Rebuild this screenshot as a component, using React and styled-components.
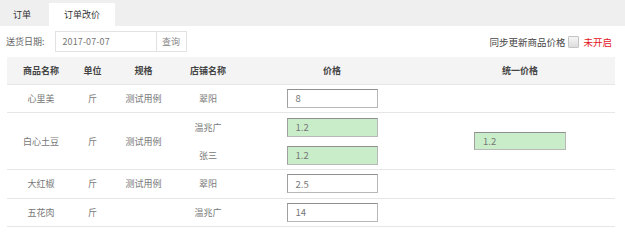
import React from "react";
import styled, { createGlobalStyle } from "styled-components";

const Global = createGlobalStyle`
  html, body { margin: 0; padding: 0; background: #fff; }
  body { font-family: "Noto Sans CJK SC", "Noto Sans", sans-serif; font-size: 9px; color: #666; }
  * { box-sizing: border-box; }
`;

const Page = styled.div`
  width: 625px;
  height: 234px;
  overflow: hidden;
`;

const TabBar = styled.div`
  display: flex;
  align-items: flex-end;
  height: 26px;
  background: #efefef;
  gap: 5px;
`;

const Tab = styled.div`
  width: ${(p) => p.$w}px;
  height: 23px;
  display: flex;
  align-items: center;
  justify-content: center;
  font-size: 9px;
  color: #333;
  background: ${(p) => (p.$active ? "#fff" : "transparent")};
`;

const FilterRow = styled.div`
  display: flex;
  align-items: center;
  padding: 5px 13px 5px 6px;
`;

const Label = styled.span`
  color: #666;
  margin-right: 10px;
  white-space: nowrap;
`;

const DateInput = styled.div`
  width: 102px;
  height: 21px;
  border: 1px solid #e2e2e2;
  display: flex;
  align-items: center;
  padding-left: 7px;
  color: #777;
  letter-spacing: 0.1px;
`;

const QueryButton = styled.div`
  width: 30px;
  height: 21px;
  border: 1px solid #e2e2e2;
  border-left: none;
  display: flex;
  align-items: center;
  justify-content: center;
  color: #888;
  background: #fff;
`;

const Spacer = styled.div`
  flex: 1;
`;

const SyncText = styled.span`
  color: #444;
  font-size: 9.5px;
`;

const CheckBox = styled.span`
  display: inline-block;
  width: 11px;
  height: 12px;
  margin: 0 4px 0 3px;
  border: 1px solid #c4c4c4;
  border-radius: 1px;
  background: linear-gradient(#f6f6f6, #dcdcdc);
`;

const Off = styled.span`
  color: #e2141b;
  font-size: 9.5px;
`;

const TableWrap = styled.div`
  padding: 0 10px 0 7px;
`;

const Table = styled.table`
  width: 608px;
  border-collapse: collapse;
  table-layout: fixed;
`;

const Th = styled.th`
  height: 27px;
  padding: 0;
  background: #f4f4f4;
  font-weight: bold;
  color: #444;
  font-size: 9px;
  text-align: center;
  border-bottom: 1px solid #e6e6e6;
`;

const Td = styled.td`
  height: 28.5px;
  padding: 0;
  text-align: center;
  vertical-align: middle;
  color: #777;
  border-bottom: ${(p) => (p.$noLine ? "none" : "1px solid #e6e6e6")};
`;

const PriceInput = styled.div`
  width: ${(p) => p.$w || 91}px;
  height: ${(p) => p.$h || 19}px;
  margin: 0 auto;
  display: flex;
  align-items: center;
  padding-left: 8px;
  text-align: left;
  color: #777;
  font-size: 9.5px;
  background: ${(p) => (p.$green ? "#c9ecc9" : "#fff")};
  border: 1px solid #b8b8b8;
  border-top-color: #8f8f8f;
  border-left-color: #a0a0a0;
`;

const cols = [68, 35, 67, 62, 186, 190];

export default function App() {
  return (
    <Page>
      <Global />
      <TabBar>
        <Tab $w={44}>订单</Tab>
        <Tab $w={66} $active>订单改价</Tab>
      </TabBar>
      <FilterRow>
        <Label>送货日期:</Label>
        <DateInput>2017-07-07</DateInput>
        <QueryButton>查询</QueryButton>
        <Spacer />
        <SyncText>同步更新商品价格</SyncText>
        <CheckBox />
        <Off>未开启</Off>
      </FilterRow>
      <TableWrap>
        <Table>
          <colgroup>
            {cols.map((w, i) => (
              <col key={i} style={{ width: w }} />
            ))}
          </colgroup>
          <thead>
            <tr>
              <Th>商品名称</Th>
              <Th>单位</Th>
              <Th>规格</Th>
              <Th>店铺名称</Th>
              <Th>价格</Th>
              <Th>统一价格</Th>
            </tr>
          </thead>
          <tbody>
            <tr>
              <Td>心里美</Td>
              <Td>斤</Td>
              <Td>测试用例</Td>
              <Td>翠阳</Td>
              <Td><PriceInput>8</PriceInput></Td>
              <Td />
            </tr>
            <tr>
              <Td rowSpan={2}>白心土豆</Td>
              <Td rowSpan={2}>斤</Td>
              <Td rowSpan={2}>测试用例</Td>
              <Td $noLine>温兆广</Td>
              <Td $noLine><PriceInput $green>1.2</PriceInput></Td>
              <Td rowSpan={2}><PriceInput $green $w={92} $h={18}>1.2</PriceInput></Td>
            </tr>
            <tr>
              <Td>张三</Td>
              <Td><PriceInput $green>1.2</PriceInput></Td>
            </tr>
            <tr>
              <Td>大红椒</Td>
              <Td>斤</Td>
              <Td>测试用例</Td>
              <Td>翠阳</Td>
              <Td><PriceInput>2.5</PriceInput></Td>
              <Td />
            </tr>
            <tr>
              <Td>五花肉</Td>
              <Td>斤</Td>
              <Td />
              <Td>温兆广</Td>
              <Td><PriceInput>14</PriceInput></Td>
              <Td />
            </tr>
          </tbody>
        </Table>
      </TableWrap>
    </Page>
  );
}
